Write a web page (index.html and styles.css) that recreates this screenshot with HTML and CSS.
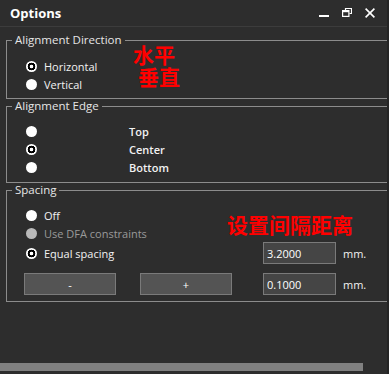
FILE: index.html
```html
<!DOCTYPE html>
<html lang="en">

<head>
  <meta charset="UTF-8" />
  <title>Options</title>
  <link rel="stylesheet" href="styles.css">
</head>

<body>
  <div class="window">
    <header class="titlebar">
      <span class="title">Options</span>
      <div class="controls">
        <svg class="ctl ctl-min" width="10" height="10" viewBox="0 0 10 10">
          <rect x="0" y="7" width="10" height="2" fill="#ffffff" />
        </svg>
        <svg class="ctl ctl-restore" width="10" height="9" viewBox="0 0 10 9">
          <path d="M3.5 2.5V0.5H9.5V5.5H7.5" fill="none" stroke="#ffffff" stroke-width="1.2" />
          <rect x="0.6" y="2.6" width="6.3" height="5.8" fill="none" stroke="#ffffff" stroke-width="1.2" />
          <rect x="0.6" y="2.6" width="6.3" height="1.6" fill="#ffffff" />
        </svg>
        <svg class="ctl ctl-close" width="10" height="10" viewBox="0 0 10 10">
          <path d="M0.6 0.6L9.4 9.4M9.4 0.6L0.6 9.4" stroke="#ffffff" stroke-width="1.6" />
        </svg>
      </div>
    </header>

    <div class="content">
      <fieldset class="group group-direction">
        <legend>Alignment Direction</legend>
        <label class="option"><span class="radio checked"></span>Horizontal</label>
        <label class="option"><span class="radio"></span>Vertical</label>
        <div class="note note-direction">
          <span>水平</span>
          <span class="note-shift">垂直</span>
        </div>
      </fieldset>

      <fieldset class="group group-edge">
        <legend>Alignment Edge</legend>
        <label class="option edge"><span class="radio"></span>Top</label>
        <label class="option edge"><span class="radio checked"></span>Center</label>
        <label class="option edge"><span class="radio"></span>Bottom</label>
      </fieldset>

      <fieldset class="group group-spacing">
        <legend>Spacing</legend>
        <label class="option"><span class="radio"></span>Off</label>
        <label class="option disabled"><span class="radio"></span>Use DFA constraints</label>
        <div class="value-row">
          <label class="option option-wide"><span class="radio checked"></span>Equal spacing</label>
          <input class="num" type="text" value="3.2000" />
          <span class="unit">mm.</span>
        </div>
        <div class="value-row step-row">
          <button class="step">-</button>
          <button class="step step-plus">+</button>
          <input class="num" type="text" value="0.1000" />
          <span class="unit">mm.</span>
        </div>
        <div class="note note-spacing">设置间隔距离</div>
      </fieldset>
    </div>

    <div class="scrollbar"><div class="thumb"></div></div>
  </div>
</body>

</html>
```

FILE: styles.css
```css
body {
  margin: 0;
  background-color: #2d2d2d;
  font-family: "Open Sans", "Noto Sans", sans-serif;
  font-size: 11px;
  color: #f2f2f2;
  overflow: hidden;
}

.window {
  height: 374px;
  display: flex;
  flex-direction: column;
  border-right: 2px solid #242424;
  overflow: hidden;
}

/* Barra de titulo */
.titlebar {
  height: 26px;
  border-bottom: 1px solid #3c3c3c;
  display: flex;
  align-items: center;
  justify-content: space-between;
  padding: 0 12px 0 10px;
}

.title {
  font-weight: 700;
  font-size: 13px;
  color: #ffffff;
  margin-top: -1px;
}

.controls {
  display: flex;
  align-items: center;
  gap: 13px;
  margin-top: -1px;
}

.content {
  flex: 1;
  padding-top: 6px;
}

/* Grupos */
.group {
  position: relative;
  margin: 0 -12px 0 6px;
  padding: 9px 0 6px 19px;
  border: 1px solid #8c8c8c;
  min-width: 0;
}

.group legend {
  margin-left: -14px;
  padding: 0 3px;
  line-height: 14px;
  font-size: 11.5px;
  color: #e6e6e6;
}

.group-direction {
  padding-top: 10px;
  padding-bottom: 5px;
}

.option {
  height: 18px;
  display: flex;
  align-items: center;
  gap: 7px;
}

.option.edge {
  gap: 92px;
  font-weight: 600;
}

.option.disabled {
  color: #9a9a9a;
}

.radio {
  width: 11px;
  height: 11px;
  border-radius: 50%;
  background: #ffffff;
  flex: none;
}

.radio.checked {
  background: radial-gradient(circle, #ffffff 0 1.6px, #000000 2.1px 3.6px, #ffffff 4.1px);
}

.disabled .radio {
  background: #b9b9b9;
}

.value-row {
  display: flex;
  align-items: center;
  height: 22px;
}

.option-wide {
  width: 237px;
}

.step-row {
  margin-top: 9px;
  margin-left: -2px;
}

.num {
  width: 73px;
  height: 22px;
  box-sizing: border-box;
  background-color: #454545;
  border: 1px solid #7a7a7a;
  color: #ffffff;
  font-family: inherit;
  font-size: 11px;
  padding: 0 3px;
  margin: 0;
}

.unit {
  margin-left: 7px;
}

.step {
  width: 92px;
  height: 22px;
  background-color: #545454;
  border: 1px solid #7a7a7a;
  color: #ffffff;
  font-family: inherit;
  font-size: 11px;
  padding: 0;
  margin: 0 24px 0 0;
}

.step-plus {
  margin-right: 31px;
}

/* Anotacoes em vermelho */
.note {
  position: absolute;
  color: #ff0000;
  font-family: "Noto Sans CJK SC", sans-serif;
  font-weight: 700;
  font-size: 21px;
  line-height: 22px;
}

.note-direction {
  top: -4px;
  left: 126px;
  display: flex;
  flex-direction: column;
}

.note-shift {
  padding-left: 5px;
}

.note-spacing {
  top: 16px;
  left: 220px;
}

.scrollbar {
  height: 8px;
  margin-bottom: 3px;
}

.thumb {
  width: 363px;
  height: 8px;
  background-color: #808080;
}
```
